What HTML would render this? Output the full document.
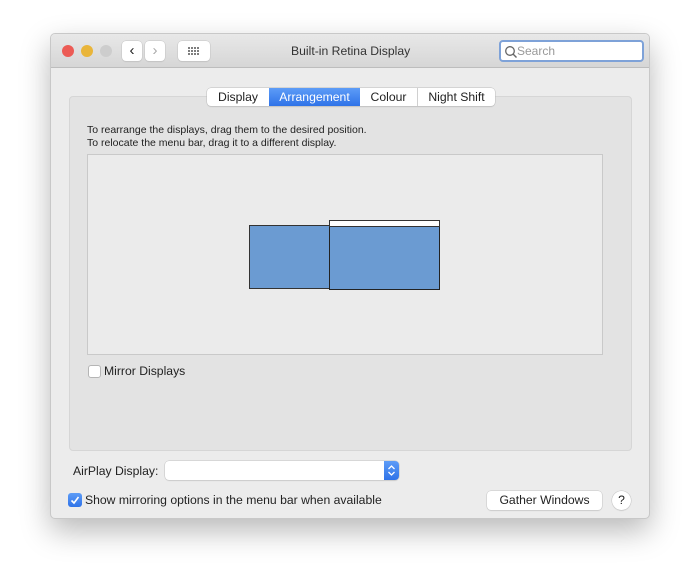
<!DOCTYPE html>
<html><head><meta charset="utf-8"><style>
*{box-sizing:border-box;margin:0;padding:0}
body{width:700px;height:586px;background:#fff;font-family:"Liberation Sans",sans-serif;position:relative;overflow:hidden}
.win{position:absolute;left:50px;top:33px;width:600px;height:486px;background:#ececec;border:1px solid #c8c8c8;border-radius:5px;box-shadow:0 12px 30px rgba(0,0,0,.28);overflow:hidden}
.tb{position:absolute;left:0;top:0;width:100%;height:34px;background:linear-gradient(#e8e8e8,#d6d6d6);border-bottom:1px solid #bdbdbd}
.dot{position:absolute;top:11px;width:12px;height:12px;border-radius:50%}
.btn{position:absolute;background:#fff;border-radius:4px;box-shadow:0 0 0 .5px #c4c4c4,0 1px 1px rgba(0,0,0,.1);font-size:12.2px;color:#222;text-align:center}
.abs{position:absolute}
.t{font-size:12.2px;color:#222;position:absolute;white-space:nowrap}
.tab{position:absolute;top:0;height:18px;line-height:18px;text-align:center;font-size:12.2px;color:#222}
</style></head><body>
<div class="win">
 <div class="tb">
  <div class="dot" style="left:11px;background:#ec5b55"></div>
  <div class="dot" style="left:30px;background:#e9b53a"></div>
  <div class="dot" style="left:49px;background:#cdcdcd"></div>
  <div class="btn" style="left:71px;top:7px;width:20px;height:20px;font-size:15px;line-height:19px">&#8249;</div>
  <div class="btn" style="left:94px;top:7px;width:20px;height:20px;font-size:15px;line-height:19px;color:#aaa">&#8250;</div>
  <div class="btn" style="left:127px;top:7px;width:32px;height:20px">
   <svg width="32" height="20"><g fill="#555"><circle cx="11" cy="7" r="1"/><circle cx="14" cy="7" r="1"/><circle cx="17" cy="7" r="1"/><circle cx="20" cy="7" r="1"/><circle cx="11" cy="10" r="1"/><circle cx="14" cy="10" r="1"/><circle cx="17" cy="10" r="1"/><circle cx="20" cy="10" r="1"/><circle cx="11" cy="13" r="1"/><circle cx="14" cy="13" r="1"/><circle cx="17" cy="13" r="1"/><circle cx="20" cy="13" r="1"/></g></svg></div>
  <div class="t" style="left:240px;top:10px;color:#333">Built-in Retina Display</div>
  <div class="abs" style="left:448px;top:6px;width:145px;height:22px;background:#fff;border:2px solid #7ea2d8;border-radius:4px">
   <svg class="abs" style="left:3px;top:3px" width="14" height="14"><circle cx="6" cy="6" r="4.3" fill="none" stroke="#666" stroke-width="1.3"/><path d="M9 9l3.5 3.5" stroke="#666" stroke-width="1.4"/></svg>
   <div class="t" style="left:16px;top:2px;color:#999;font-size:12px">Search</div>
  </div>
 </div>
 <div class="abs" style="left:18px;top:62px;width:563px;height:355px;background:#e3e3e3;border:1px solid #d6d6d6;border-radius:4px"></div>
 <div class="abs" style="left:156px;top:54px;width:288px;height:18px;background:#fff;border-radius:4px;box-shadow:0 0 0 .5px #bcbcbc,0 1px 1px rgba(0,0,0,.12)">
  <div class="tab" style="left:0;width:62px">Display</div>
  <div class="tab" style="left:62px;width:91px;background:linear-gradient(#5d9cf7,#2f73e8);color:#fff">Arrangement</div>
  <div class="tab" style="left:153px;width:57px">Colour</div>
  <div class="tab" style="left:210px;width:78px;border-left:1px solid #d0d0d0">Night Shift</div>
 </div>
 <div class="t" style="left:36px;top:90px;font-size:10.5px">To rearrange the displays, drag them to the desired position.</div>
 <div class="t" style="left:36px;top:103px;font-size:10.5px">To relocate the menu bar, drag it to a different display.</div>
 <div class="abs" style="left:36px;top:120px;width:516px;height:201px;background:#ebebeb;border:1px solid #c9c9c9"></div>
 <div class="abs" style="left:198px;top:191px;width:82px;height:64px;background:#6b9bd2;border:1px solid #333"></div>
 <div class="abs" style="left:278px;top:192px;width:111px;height:64px;background:#6b9bd2;border:1px solid #222"></div>
 <div class="abs" style="left:278px;top:186px;width:111px;height:7px;background:#fff;border:1px solid #333"></div>
 <div class="abs" style="left:37px;top:331px;width:13px;height:13px;background:#fff;border:1px solid #b5b5b5;border-radius:3px"></div>
 <div class="t" style="left:53px;top:330px">Mirror Displays</div>
 <div class="t" style="left:22px;top:430px">AirPlay Display:</div>
 <div class="abs" style="left:114px;top:427px;width:234px;height:19px;background:#fff;border-radius:4px;box-shadow:0 0 0 .5px #c2c2c2,0 1px 1px rgba(0,0,0,.1)"></div>
 <div class="abs" style="left:333px;top:427px;width:15px;height:19px;background:linear-gradient(#5d9cf7,#2f73e8);border-radius:0 4px 4px 0">
  <svg width="15" height="19"><path d="M4.5 8l3-3 3 3M4.5 11l3 3 3-3" fill="none" stroke="#fff" stroke-width="1.3"/></svg></div>
 <div class="abs" style="left:17px;top:459px;width:14px;height:14px;background:linear-gradient(#5d9cf7,#2f73e8);border-radius:3px">
  <svg width="14" height="14"><path d="M3.5 7.5l2.5 2.5 4.5-6" fill="none" stroke="#fff" stroke-width="1.6"/></svg></div>
 <div class="t" style="left:34px;top:459px">Show mirroring options in the menu bar when available</div>
 <div class="btn" style="left:436px;top:457px;width:115px;height:19px;line-height:19px">Gather Windows</div>
 <div class="btn" style="left:561px;top:457px;width:19px;height:19px;border-radius:50%;line-height:19px">?</div>
</div>
</body></html>
